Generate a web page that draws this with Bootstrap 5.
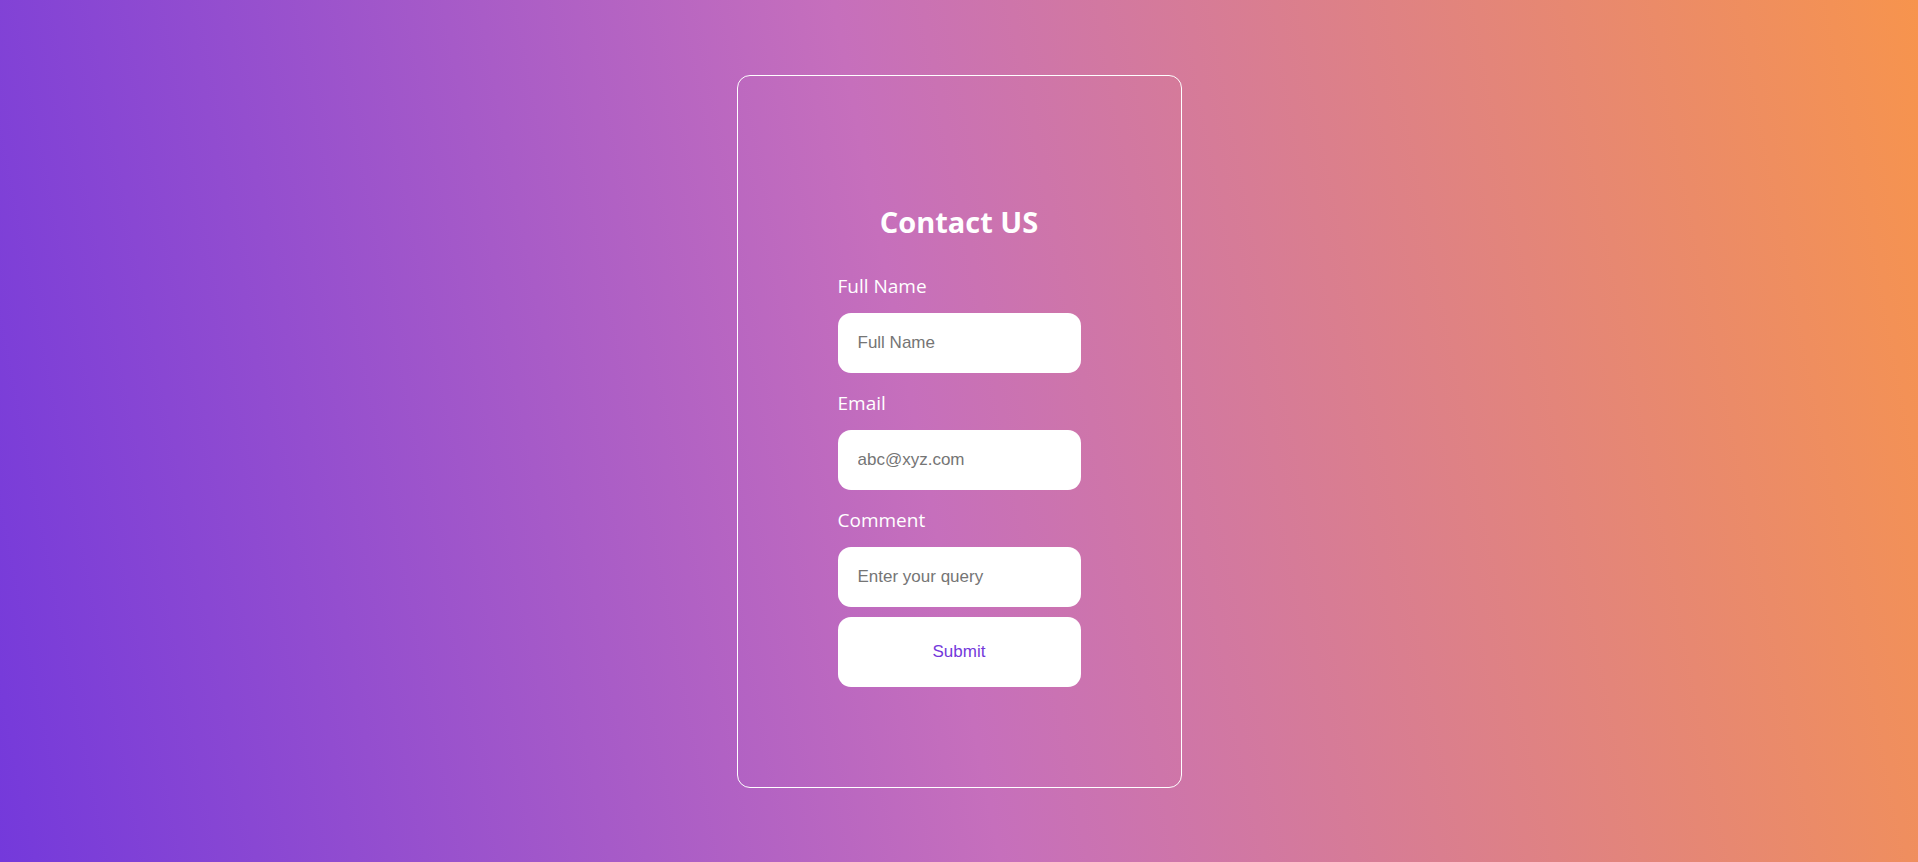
<!DOCTYPE html>
<html lang="en">
<head>
<meta charset="utf-8">
<meta name="viewport" content="width=device-width, initial-scale=1">
<title>Contact US</title>
<link href="https://cdn.jsdelivr.net/npm/bootstrap@5.3.0/dist/css/bootstrap.min.css" rel="stylesheet">
<style>
  body {
    background: linear-gradient(79deg, #7439db, #c66fbc 48%, #f7944d);
    font-family: "Segoe UI", "Open Sans", sans-serif;
  }
  .contact-form {
    padding: 100px;
    border-radius: 13px;
  }
  .contact-fields { width: 243px; }
  .contact-title {
    margin: 26px 0 31px;
    font-size: 29px;
    line-height: 40px;
  }
  .contact-label {
    margin: 0 0 13px;
    font-size: 19px;
    line-height: 27px;
  }
  .contact-input, .contact-submit, .contact-submit:hover {
    background: #fff;
    border: 0;
    border-radius: 13px;
    font-family: Arial, "Liberation Sans", sans-serif;
    font-size: 17px;
  }
  .contact-input {
    height: 60px;
    padding: 0 20px;
  }
  .contact-input::placeholder { color: #757575; }
  .contact-group { margin-bottom: 17px; }
  .contact-group:last-of-type { margin-bottom: 10px; }
  .contact-submit, .contact-submit:hover {
    height: 70px;
    color: #7439db;
  }
</style>
</head>
<body class="min-vh-100 d-flex align-items-center justify-content-center">
  <form class="contact-form border border-white text-white">
    <div class="contact-fields">
      <h1 class="contact-title fw-bold text-center">Contact US</h1>
      <div class="contact-group">
        <label class="contact-label d-block" for="fullName">Full Name</label>
        <input class="contact-input form-control" type="text" id="fullName" placeholder="Full Name">
      </div>
      <div class="contact-group">
        <label class="contact-label d-block" for="email">Email</label>
        <input class="contact-input form-control" type="email" id="email" placeholder="abc@xyz.com">
      </div>
      <div class="contact-group">
        <label class="contact-label d-block" for="comment">Comment</label>
        <input class="contact-input form-control" type="text" id="comment" placeholder="Enter your query">
      </div>
      <button class="contact-submit btn w-100" type="submit">Submit</button>
    </div>
  </form>
<script src="https://cdn.jsdelivr.net/npm/bootstrap@5.3.0/dist/js/bootstrap.bundle.min.js"></script>
</body>
</html>
